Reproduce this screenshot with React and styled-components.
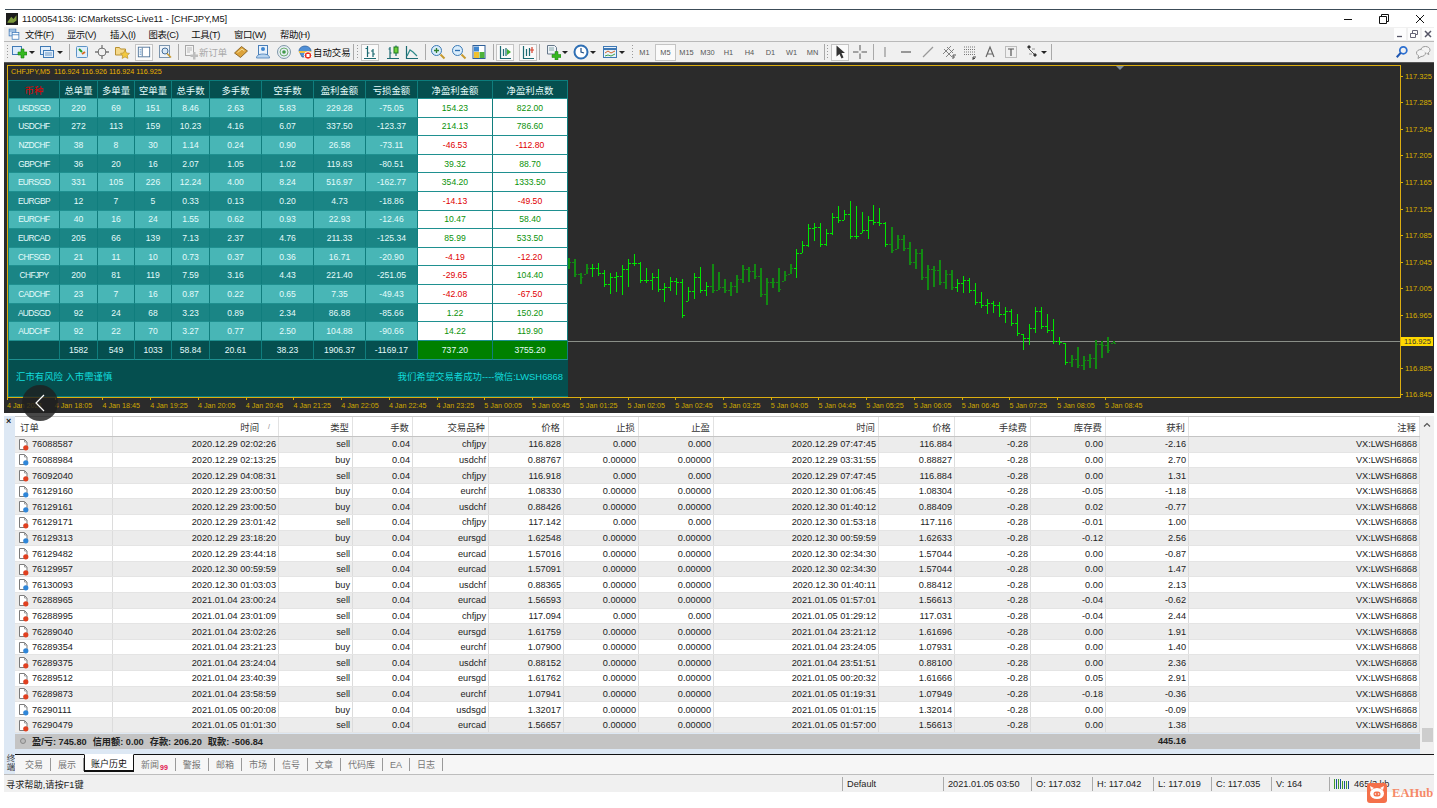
import React from "react";
import styled, { createGlobalStyle } from "styled-components";

const UI = `"Liberation Sans", "Noto Sans CJK SC", sans-serif`;

const Global = createGlobalStyle`
  html, body { margin: 0; padding: 0; background: #fff; }
  body { font-family: ${UI}; overflow: hidden; }
  * { box-sizing: border-box; }
`;

const Page = styled.div`
  position: relative;
  width: 1437px;
  height: 808px;
  padding-top: 9px;
  overflow: hidden;
  background: #fff;
`;
const TopLine = styled.div`
  height: 1px;
  margin-left: 5px;
  background: #3c4c58;
`;
const Win = styled.div`
  width: 1430px;
  margin-left: 4px;
  display: flex;
  flex-direction: column;
`;

/* title + menu */
const TitleBar = styled.div`
  height: 17px;
  display: flex;
  align-items: center;
  padding-left: 2px;
  background: #fff;
  color: #111;
  font-size: 9.3px;
`;
const TitleText = styled.span`
  margin-left: 4px;
`;
const Caption = styled.div`
  margin-left: auto;
  display: flex;
  gap: 26px;
  padding-right: 9px;
  align-items: center;
`;
const MenuBar = styled.div`
  height: 14px;
  display: flex;
  align-items: center;
  padding-left: 4px;
  background: #f0f0f0;
  font-size: 9.4px;
  letter-spacing: -0.4px;
  color: #111;
`;
const MenuItem = styled.span`
  margin-left: ${(p) => p.$ml}px;
  white-space: nowrap;
`;
const MdiBtns = styled.div`
  margin-left: auto;
  display: flex;
  gap: 2px;
`;
const MdiBtn = styled.div`
  width: 12px;
  height: 12px;
  background: #fdfdfd;
  display: flex;
  align-items: center;
  justify-content: center;
`;

/* toolbar */
const ToolBar = styled.div`
  height: 21px;
  display: flex;
  align-items: center;
  padding-left: 1px;
  background: #f0f0f0;
  border-top: 1px solid #b9b9b9;
`;
const Grip = styled.div`
  flex: none;
  width: 3px;
  height: 16px;
  margin-left: ${(p) => p.$ml || 0}px;
  background-image: radial-gradient(#9a9a9a 0.8px, transparent 0.9px);
  background-size: 3px 3px;
`;
const Sep = styled.div`
  flex: none;
  width: 1px;
  height: 16px;
  margin-left: ${(p) => p.$ml || 0}px;
  margin-right: ${(p) => p.$mr || 0}px;
  background: #a9a9a9;
`;
const Tool = styled.div`
  flex: none;
  width: ${(p) => p.$w || 16}px;
  height: ${(p) => (p.$pressed ? 17 : 16)}px;
  margin-left: ${(p) => p.$ml || 0}px;
  display: flex;
  align-items: center;
  justify-content: center;
  background: ${(p) => (p.$pressed ? "#fafafa" : "transparent")};
  border: ${(p) => (p.$pressed ? "1px solid #c4c4c4" : "0")};
`;
const Drop = styled.div`
  flex: none;
  width: 0;
  height: 0;
  margin-left: ${(p) => p.$ml || 0}px;
  margin-right: 1px;
  border-left: 3px solid transparent;
  border-right: 3px solid transparent;
  border-top: 3px solid #222;
`;
const ToolText = styled.span`
  flex: none;
  width: ${(p) => p.$w}px;
  font-size: 9.4px;
  white-space: nowrap;
  color: ${(p) => (p.$off ? "#a8a8a8" : "#111")};
`;
const Period = styled.div`
  flex: none;
  width: 21px;
  height: 17px;
  display: flex;
  align-items: center;
  justify-content: center;
  font-size: 7.4px;
  color: #555;
  background: ${(p) => (p.$on ? "#fafafa" : "transparent")};
  border: ${(p) => (p.$on ? "1px solid #c4c4c4" : "0")};
`;
const ToolRight = styled.div`
  margin-left: auto;
  padding-right: 3px;
  display: flex;
  gap: 6px;
  align-items: center;
`;

/* chart */
const Chart = styled.div`
  position: relative;
  height: 351px;
  padding: 2px 0 0 3px;
  background: #2b2b2b;
  border-top: 1px solid #555;
  display: grid;
  grid-template-columns: 1394px 1fr;
  grid-template-rows: 333px 1fr;
`;
const Frame = styled.div`
  position: relative;
  border: 1px solid #dcae10;
`;
const Legend = styled.div`
  position: absolute;
  left: 3px;
  top: 1px;
  font-size: 7.2px;
  line-height: 10px;
  color: #e8b400;
  white-space: nowrap;
`;
const Marker = styled.div`
  position: absolute;
  left: 1108px;
  top: 0;
  width: 0;
  height: 0;
  border-left: 4px solid transparent;
  border-right: 4px solid transparent;
  border-top: 4px solid #7b8a99;
`;
const Bars = styled.svg`
  position: absolute;
  left: 0;
  top: 0;
  display: block;
`;
const Scale = styled.div`
  display: flex;
  flex-direction: column;
  margin-top: -2px;
`;
const Tick = styled.div`
  flex: none;
  height: 26.55px;
  display: flex;
  align-items: center;
  padding-left: 0;
  font-size: 7.6px;
  color: #d9b000;
  &::before {
    content: "";
    width: 2px;
    height: 1px;
    margin-right: 2px;
    background: #d9b000;
  }
`;
const PriceNow = styled.span`
  margin-left: -4px;
  padding: 0 2px 0 3px;
  height: 9px;
  line-height: 9px;
  background: #ffd800;
  color: #333;
`;
const TimeAxis = styled.div`
  grid-column: 1 / -1;
  display: flex;
`;
const TimeLabel = styled.div`
  flex: none;
  width: 47.74px;
  padding-top: 3px;
  font-size: 7.2px;
  color: #cfa900;
  white-space: nowrap;
  position: relative;
  &::before {
    content: "";
    position: absolute;
    left: 0;
    top: 0;
    width: 1px;
    height: 2px;
    background: #d9b000;
  }
`;

/* panel that the EA draws on the chart */
const Panel = styled.div`
  position: absolute;
  left: 0;
  top: 14px;
  width: 560px;
  height: 317px;
  display: grid;
  grid-template-columns: 51px 38px 37px 37px 38px 52px 52px 52px 52px 75px 75px;
  grid-template-rows: 18px repeat(13, 18.62px) 19px 1fr;
  background: #108383;
  border: 1px solid #0c7c7c;
  font-size: 8.6px;
  color: #e4fbfb;
`;
const PCell = styled.div`
  display: flex;
  align-items: center;
  justify-content: center;
  white-space: nowrap;
  border-right: 1px solid #107d7d;
  border-bottom: 1px solid #1f9090;
  background: ${(p) =>
    ({ head: "#054f4f", light: "#48b6b6", dark: "#1a8585", net: "#fff", total: "#054f4f", win: "#008000" })[p.$tone]};
  color: ${(p) => p.$color || "inherit"};
  font-size: ${(p) => (p.$tone === "head" ? "9.4px" : p.$name ? "8.4px" : "8.6px")};
  letter-spacing: ${(p) => (p.$name ? "-0.6px" : "0")};
`;
const PFoot = styled.div`
  grid-column: 1 / -1;
  display: flex;
  align-items: center;
  justify-content: space-between;
  padding: 0 5px 3px 7px;
  background: #054f4f;
  color: #12dcdc;
  font-size: 9.4px;
`;
const BackBtn = styled.div`
  position: absolute;
  left: 18px;
  top: 322px;
  width: 36px;
  height: 36px;
  border-radius: 50%;
  background: rgba(32, 32, 32, 0.82);
  display: flex;
  align-items: center;
  justify-content: center;
`;

/* terminal */
const Terminal = styled.div`
  margin-top: 3px;
  height: 338px;
  display: grid;
  grid-template-columns: 11px 1405px 14px;
  background: #f0f0f0;
`;
const Side = styled.div`
  background: #dde8f4;
  padding: 0 0 0 2px;
  font-size: 9px;
  font-weight: 700;
  line-height: 9px;
  color: #222;
  padding-top: 1px;
`;
const Grid = styled.div`
  display: flex;
  flex-direction: column;
  background: #dde8f4;
`;
const THead = styled.div`
  display: grid;
  grid-template-columns: 98px 166px 74px 60px 76px 75px 75px 75px 165px 76px 76px 75px 83px 231px;
  height: 21px;
  background: #fff;
  border-top: 1px solid #c8c8c8;
  border-bottom: 1px solid #c4c4c4;
`;
const Th = styled.div`
  padding: 0 3px 0 ${(p) => (p.$left ? 5 : 3)}px;
  display: flex;
  align-items: center;
  justify-content: ${(p) => (p.$left ? "flex-start" : "flex-end")};
  border-right: 1px solid #e2e2e2;
  font-size: 9.4px;
  color: #333;
`;
const SortMark = styled.span`
  margin: 0 5px 0 9px;
  font-size: 7px;
  color: #888;
`;
const TBody = styled.div`
  height: 296.5px;
  display: grid;
  grid-template-rows: repeat(19, 1fr);
`;
const Row = styled.div`
  display: grid;
  grid-template-columns: 98px 166px 74px 60px 76px 75px 75px 75px 165px 76px 76px 75px 83px 231px;
  background: ${(p) => (p.$odd ? "#ececec" : "#fff")};
  border-bottom: 1px solid #e4e4e4;
`;
const Td = styled.div`
  display: flex;
  align-items: center;
  justify-content: ${(p) => (p.$left ? "flex-start" : "flex-end")};
  padding: 0 2px 0 ${(p) => (p.$left ? 3 : 2)}px;
  gap: ${(p) => (p.$left ? 3 : 0)}px;
  border-right: 1px solid #dcdcdc;
  font-size: 9.2px;
  color: #222;
  white-space: nowrap;
`;
const Summary = styled.div`
  height: 15.5px;
  display: grid;
  grid-template-columns: 1091px 83px 1fr;
  background: #c4c4c4;
  font-size: 9.2px;
  font-weight: 700;
  color: #222;
  align-items: center;
`;
const SumLeft = styled.div`
  display: flex;
  align-items: center;
  gap: 5px;
  padding-left: 5px;
`;
const SumPart = styled.span`
  margin-right: 1px;
  white-space: nowrap;
`;
const SumDot = styled.span`
  width: 6px;
  height: 6px;
  border-radius: 50%;
  border: 1px solid #888;
  background: #bbb;
  margin-right: 1px;
`;
const SumRight = styled.div`
  text-align: right;
  padding-right: 3px;
`;
const ScrollBar = styled.div`
  display: flex;
  flex-direction: column;
  align-items: center;
  background: #f0f0f0;
  padding-top: 6px;
`;
const Thumb = styled.div`
  margin-top: auto;
  width: 11px;
  height: 14px;
  margin-bottom: 3px;
  background: #cdcdcd;
`;
const ScrollEnd = styled.div`
  height: 7px;
  margin-bottom: 2px;
`;

/* tabs + status */
const Tabs = styled.div`
  height: 21px;
  display: flex;
  background: #f6f6f6;
  border-bottom: 1px solid #bdbdbd;
`;
const TabGrip = styled.div`
  flex: none;
  width: 11px;
  overflow: hidden;
  writing-mode: vertical-rl;
  font-size: 8.5px;
  line-height: 11px;
  white-space: nowrap;
  color: #333;
  background: #dde8f4;
`;
const TabRow = styled.div`
  flex: 1;
  display: flex;
  align-items: flex-start;
  border-top: 1px solid #111;
  padding-left: 3px;
`;
const TabItem = styled.div`
  flex: none;
  height: ${(p) => (p.$on ? 18 : 13)}px;
  margin-top: ${(p) => (p.$on ? -1 : 3)}px;
  padding: ${(p) => (p.$on ? "2px 6px 0" : "0 7px")};
  display: flex;
  align-items: ${(p) => (p.$on ? "flex-start" : "center")};
  font-size: 9px;
  white-space: nowrap;
  color: ${(p) => (p.$on ? "#111" : "#777")};
  background: ${(p) => (p.$on ? "#fff" : "transparent")};
  border-right: ${(p) => (p.$on ? "1px solid #111" : "1px solid #999")};
  border-left: ${(p) => (p.$on ? "1px solid #111" : "0")};
  border-bottom: ${(p) => (p.$on ? "2px solid #111" : "0")};
  border-top: ${(p) => (p.$on ? "1px solid #fff" : "0")};
`;
const Badge = styled.sub`
  font-size: 7px;
  font-weight: 700;
  color: #e0144c;
  margin-left: 1px;
  align-self: flex-end;
  line-height: 7px;
`;
const Status = styled.div`
  height: 17px;
  display: flex;
  align-items: center;
  background: #f0f0f0;
  font-size: 9.2px;
  color: #222;
`;
const StatusCell = styled.div`
  flex: none;
  width: ${(p) => p.$w}px;
  height: 14px;
  display: flex;
  align-items: center;
  gap: 3px;
  padding-left: ${(p) => (p.$first ? 2 : 4)}px;
  border-left: ${(p) => (p.$first ? "0" : "1px solid #aaa")};
  white-space: nowrap;
`;
const Brand = styled.div`
  position: absolute;
  left: 1367px;
  top: 783px;
  display: flex;
  align-items: center;
  gap: 5px;
`;
const BrandText = styled.span`
  font-family: "Liberation Serif", serif;
  font-weight: 700;
  font-size: 12.6px;
  color: #f58a68;
`;

/* icons */
const Svg = ({ children, s = 16 }) => (
  <svg width={s} height={s} viewBox="0 0 16 16" fill="none" style={{ flex: "none", display: "block" }}>
    {children}
  </svg>
);
const Ico = {
  app: (
    <Svg s={12}>
      <rect width="16" height="16" fill="#1c1c1c" />
      <path d="M2 12 7 5l3 3 4-5v7l-4 3H2z" fill="#7d9a3c" />
    </Svg>
  ),
  minimize: (
    <svg width="10" height="10"><path d="M1 5.5h8" stroke="#111" /></svg>
  ),
  restore: (
    <svg width="10" height="10" fill="none" stroke="#111"><path d="M.5 2.5h7v7h-7zM2.5 2.5v-2h7v7h-2" /></svg>
  ),
  close: (
    <svg width="10" height="10" stroke="#111"><path d="M1 1l8 8M9 1l-8 8" /></svg>
  ),
  menuDoc: (
    <Svg s={12}>
      <rect x="1.5" y="1.5" width="9" height="9" fill="#dbe9f8" stroke="#3a76b8" />
      <rect x="5.5" y="6" width="9" height="9" fill="#fff" stroke="#3a76b8" />
      <path d="M1.5 4h9M5.5 9h9" stroke="#3a76b8" />
    </Svg>
  ),
  newChart: (
    <Svg>
      <rect x="1.5" y="2.5" width="9" height="8" fill="#dcebfb" stroke="#3f79b5" />
      <path d="M10 5v3H7v3h3v3h3v-3h3V8h-3V5z" fill="#35b820" stroke="#1a7d10" strokeWidth=".6" />
    </Svg>
  ),
  profile: (
    <Svg>
      <rect x="1.5" y="2.5" width="10" height="8" fill="#e3effb" stroke="#3f79b5" />
      <rect x="4.5" y="6.5" width="10" height="7" fill="#e3effb" stroke="#3f79b5" />
      <path d="M6 9h7M6 11h7" stroke="#6a97c7" />
    </Svg>
  ),
  market: (
    <Svg>
      <rect x="2.5" y="2.5" width="11" height="11" rx="1" fill="#dfeefa" stroke="#5c93c7" />
      <path d="M5 5l3 3" stroke="#23a023" strokeWidth="2" />
      <path d="M8 10l3-2" stroke="#d86a20" strokeWidth="2" />
    </Svg>
  ),
  cross: (
    <Svg>
      <circle cx="8" cy="8" r="4" stroke="#777" />
      <path d="M8 1v4M8 11v4M1 8h4M11 8h4" stroke="#777" strokeWidth="1.3" />
    </Svg>
  ),
  folderStar: (
    <Svg>
      <path d="M1.5 5V3.500h4l1 1.500h5v6h-10z" fill="#f5d98b" stroke="#b89030" />
      <path d="M11 6l1.500 3 3 .4-2.200 2 .6 3-2.900-1.500-2.900 1.500.6-3-2.200-2 3-.4z" fill="#f3c93f" stroke="#b89030" strokeWidth=".7" />
    </Svg>
  ),
  navigator: (
    <Svg s={14}>
      <rect x="1.500" y="2.500" width="13" height="11" fill="#fff" stroke="#4a6f96" />
      <path d="M6 3v10" stroke="#4a6f96" />
      <path d="M3 5.500h2M3 8h2M3 10.500h2" stroke="#3c7fc0" />
    </Svg>
  ),
  tester: (
    <Svg>
      <rect x="2.500" y="1.500" width="10" height="12" fill="#eef3f8" stroke="#7b94ad" />
      <circle cx="8" cy="7" r="3" fill="#d8e8f6" stroke="#456e9a" />
      <path d="M10 9.500l4 4" stroke="#c89a30" strokeWidth="1.600" />
    </Svg>
  ),
  order: (
    <Svg>
      <rect x="2.500" y="1.500" width="8" height="10" fill="#f4f4f4" stroke="#a8a8a8" />
      <path d="M4 4h5M4 6h5M4 8h3" stroke="#bbb" />
      <path d="M10 8v2.500H7.500v2.500H10v2.500h2.500V13H15v-2.500h-2.500V8z" fill="#bdbdbd" />
    </Svg>
  ),
  gold: (
    <Svg>
      <path d="M1.500 9 8.500 2.500l6 4.500-7 6.500z" fill="#dca23a" stroke="#7a5618" strokeWidth=".8" />
      <path d="M4.500 8.500 9 5l2.500 2" stroke="#f7e3a0" />
    </Svg>
  ),
  person: (
    <Svg>
      <rect x="3.500" y="1.500" width="9" height="9" fill="#eaf2fb" stroke="#4a7fb8" />
      <circle cx="8" cy="5" r="2" fill="#3f86cf" />
      <path d="M1.500 14c0-3 3-4 6.500-4s6.500 1 6.500 4z" fill="#b7d3ee" stroke="#4a7fb8" strokeWidth=".8" />
    </Svg>
  ),
  signal: (
    <Svg>
      <circle cx="8" cy="8" r="6.500" fill="#e6eef4" stroke="#7f97a8" />
      <circle cx="8" cy="8" r="4" stroke="#6faf72" />
      <circle cx="8" cy="8" r="1.800" fill="#3f9a48" />
    </Svg>
  ),
  auto: (
    <Svg>
      <path d="M2 7c0-3 3-5 6-5s6 2 6 5l-3 6H5z" fill="#4f8fd6" stroke="#2e5f99" strokeWidth=".7" />
      <path d="M2 8h12" stroke="#f0c040" strokeWidth="2" />
      <circle cx="11" cy="11.500" r="3.800" fill="#e83020" stroke="#fff" />
      <rect x="9.500" y="10" width="3" height="3" fill="#fff" />
    </Svg>
  ),
  barChart: (
    <Svg>
      <path d="M2 14.500h12M5.500 2v11M3.500 4.500h2M5.500 9h2M11 5v8M9 7h2M11 10h2" stroke="#1c6a72" strokeWidth="1.200" />
    </Svg>
  ),
  candle: (
    <Svg>
      <path d="M2 14.500h12M5 3v11M11 1.500V12" stroke="#1c6a72" strokeWidth="1.200" />
      <rect x="9" y="3" width="4" height="6" fill="#6fd03a" stroke="#1f7a22" />
      <path d="M3.500 5h1.500M5 9h1.500" stroke="#1c6a72" />
    </Svg>
  ),
  line: (
    <Svg>
      <path d="M2.500 2v12.500H14" stroke="#1c6a72" strokeWidth="1.200" />
      <path d="M3 12l3-6 3 2 4 4" stroke="#2f8a8a" strokeWidth="1.200" />
    </Svg>
  ),
  zoomIn: (
    <Svg>
      <circle cx="6.500" cy="6.500" r="5" fill="#d8ecfb" stroke="#3b79b4" />
      <path d="M4 6.500h5M6.500 4v5" stroke="#2f7f2f" strokeWidth="1.300" />
      <path d="M10.500 10.500l4 4" stroke="#c69a2f" strokeWidth="2" />
    </Svg>
  ),
  zoomOut: (
    <Svg>
      <circle cx="6.500" cy="6.500" r="5" fill="#d8ecfb" stroke="#3b79b4" />
      <path d="M4 6.500h5" stroke="#2f6fb0" strokeWidth="1.300" />
      <path d="M10.500 10.500l4 4" stroke="#c69a2f" strokeWidth="2" />
    </Svg>
  ),
  tile: (
    <Svg>
      <rect x="2" y="1.500" width="12" height="13" fill="#fff" stroke="#2e5f99" />
      <rect x="3" y="2.500" width="5" height="5" fill="#3f86cf" />
      <rect x="8.500" y="8" width="5" height="6" fill="#4db23a" />
      <rect x="3" y="8" width="5" height="6" fill="#f0c030" />
    </Svg>
  ),
  shiftEnd: (
    <Svg>
      <path d="M3.500 2v12.500H14M6.500 5v7M9 4v8" stroke="#1c6a72" strokeWidth="1.200" />
      <path d="M10 5l4 3-4 3z" fill="#3fb030" />
    </Svg>
  ),
  shiftPos: (
    <Svg>
      <path d="M3.500 2v12.500H14M6.500 5v7M9.500 4v8" stroke="#1c6a72" strokeWidth="1.200" />
      <path d="M12 3v6M10 6h4" stroke="#d8402a" strokeWidth="1.200" />
    </Svg>
  ),
  newDoc: (
    <Svg>
      <path d="M2.500 1.500h7l2 2V10h-9z" fill="#eef3f8" stroke="#66788a" />
      <path d="M4 4h5M4 6h5" stroke="#8aa" />
      <path d="M10 7.500v3H7v3h3v2.500h3v-2.500h3v-3h-3v-3z" fill="#35b820" stroke="#1a7d10" strokeWidth=".5" />
    </Svg>
  ),
  clock: (
    <Svg>
      <circle cx="8" cy="8" r="6.500" fill="#fff" stroke="#2e6fb4" strokeWidth="2" />
      <path d="M8 4v4l3 1" stroke="#1e4f86" strokeWidth="1.200" />
    </Svg>
  ),
  template: (
    <Svg>
      <rect x="1.500" y="2.500" width="13" height="11" fill="#e9f2fb" stroke="#3f79b5" />
      <path d="M1.500 5h13" stroke="#3f79b5" strokeWidth="2" />
      <path d="M3 9l3-2 3 2 4-2" stroke="#d4652a" />
      <path d="M3 12l3-1 3 1 4-2" stroke="#3fa04a" />
    </Svg>
  ),
  pointer: (
    <Svg>
      <path d="M4.500 1.500v11l3-2.500 2 4.500 2-1-2-4.500H13z" fill="#333" />
    </Svg>
  ),
  crosshair: (
    <Svg>
      <path d="M8 1v5.500M8 9.500V15M1 8h5.500M9.500 8H15" stroke="#555" />
    </Svg>
  ),
  vLine: (
    <Svg><path d="M8 3v10" stroke="#999" strokeWidth="1.300" /></Svg>
  ),
  hLine: (
    <Svg><path d="M3 8h10" stroke="#666" strokeWidth="1.300" /></Svg>
  ),
  trend: (
    <Svg><path d="M3 13 13 3" stroke="#999" strokeWidth="1.200" /></Svg>
  ),
  channel: (
    <Svg>
      <path d="M2 10 10 2M5 13l8-8M3 5l8 8M6 3l6 6" stroke="#777" strokeWidth=".9" />
      <path d="M12 11v4M12 11h3M12 13h2" stroke="#555" />
    </Svg>
  ),
  fibo: (
    <Svg>
      <path d="M2 3h12M2 5.500h12M2 8h12M2 10.500h12" stroke="#777" strokeDasharray="1 1" />
      <path d="M11 13v3M11 13h3M11 14.500h2" stroke="#444" />
    </Svg>
  ),
  textA: (
    <Svg><path d="M4 13 8 3l4 10M5.500 10h5" stroke="#666" strokeWidth="1.200" /></Svg>
  ),
  label: (
    <Svg>
      <rect x="2.500" y="2.500" width="11" height="11" stroke="#888" strokeDasharray="1 1" />
      <path d="M5 5h6M8 5v7" stroke="#555" strokeWidth="1.200" />
    </Svg>
  ),
  shapes: (
    <Svg>
      <path d="M3 3l2-2 2 2-2 2zM9 11l2-2 2 2-2 2z" fill="#333" />
      <path d="M5 5l5 5" stroke="#555" />
      <path d="M8 5h3M5 10h3" stroke="#999" />
    </Svg>
  ),
  search: (
    <Svg s={14}>
      <circle cx="9.500" cy="6" r="4" stroke="#2c6fd0" strokeWidth="2" />
      <path d="M6.500 9 2 14" stroke="#1e56b0" strokeWidth="2.400" />
    </Svg>
  ),
  chat: (
    <Svg>
      <path d="M1.500 9c0-2 2-3.500 4.500-3.500s4.500 1.500 4.500 3.500S8.500 12.500 6 12.500l-3 2 .6-2.800C2.300 11 1.500 10 1.500 9z" fill="#f4f4f4" stroke="#9a9a9a" />
      <path d="M6 5c.6-1.500 2.300-2.500 4.500-2.500C13 2.500 15 4 15 6c0 1-.6 2-1.600 2.600l.4 2-2.300-1.400" fill="#f4f4f4" stroke="#9a9a9a" />
    </Svg>
  ),
  back: (
    <svg width="12" height="20" fill="none" stroke="#fff" strokeWidth="1.200"><path d="M10 2 2 10l8 8" /></svg>
  ),
  mdiMin: (
    <svg width="8" height="8"><path d="M1 6.500h5" stroke="#556" strokeWidth="1.300" /></svg>
  ),
  mdiRestore: (
    <svg width="8" height="8" fill="none" stroke="#667"><path d="M.5 3.500h5v4h-5zM2.500 3V.5h5v4H6" /></svg>
  ),
  mdiClose: (
    <svg width="8" height="8" stroke="#556" strokeWidth="1.500"><path d="M1 1l6 6M7 1 1 7" /></svg>
  ),
  up: (
    <svg width="8" height="6" fill="none" stroke="#555" strokeWidth="1.200"><path d="M1 4.500 4 1.500l3 3" /></svg>
  ),
  down: (
    <svg width="8" height="6" fill="none" stroke="#555" strokeWidth="1.200"><path d="M1 1.500 4 4.500l3-3" /></svg>
  ),
  volume: (
    <svg width="17" height="12">
      {[0, 2, 4, 6, 8, 10, 12, 14].map((x, i) => (
        <rect key={x} x={x} y={i < 4 ? 1 : 3} width="1" height={i < 4 ? 10 : 8} fill={i % 2 ? "#1c4f9c" : "#3f9a2a"} />
      ))}
    </svg>
  ),
};
const Doc = ({ kind }) => (
  <svg width="11" height="13" viewBox="0 0 11 13" fill="none" style={{ flex: "none" }}>
    <path d="M1.500 1.500h5l2.500 2.500v7.500h-7.500z" fill="#fff" stroke="#7b7b7b" />
    <path d="M6.500 1.500V4H9" stroke="#9a9a9a" />
    <circle cx="7.800" cy="9.800" r="2.600" fill={kind === "sell" ? "#e04020" : "#2f86d8"} />
  </svg>
);

/* chart data: high / low as read off the picture, in page pixels */
const H = [258,259,273,264,264,263,270,273,272,265,259,254,262,268,273,269,283,277,278,279,287,273,267,282,264,272,279,282,275,265,267,264,268,278,278,268,271,264,249,241,224,223,223,229,213,206,210,201,206,212,216,205,208,222,227,235,235,242,249,249,265,266,260,270,270,279,276,278,283,292,299,301,302,307,309,314,334,324,307,307,314,319,337,343,355,347,356,354,340,341,337,341];
const L = [269,277,284,274,277,276,287,294,292,295,287,266,283,283,290,292,302,291,295,318,301,299,293,296,293,290,293,296,293,283,282,279,297,305,288,292,281,274,278,253,247,241,247,246,235,223,220,239,239,233,239,225,226,247,253,249,251,265,269,280,290,287,285,289,290,292,293,293,305,308,314,313,317,323,326,336,350,345,333,329,333,344,345,365,367,368,370,368,369,358,353,343];
const pts = H.map((h, i) => ({ h, l: L[i], x: Math.round(568 + 5.99 * i) }));
const dark = (i) => i < 4 || (i >= 24 && i <= 37) || (i >= 54 && i <= 64) || i >= 84;

function PriceBars() {
  let prev = pts[0].h + 6;
  return (
    <Bars width="1392" height="331" viewBox="8 66 1392 331" shapeRendering="crispEdges">
      <rect x="568" y="341" width="832" height="1" fill="#8a8f88" />
      {pts.map((p, i) => {
        const next = pts[i + 1] || p;
        const open = Math.max(p.h, Math.min(p.l, prev));
        const falling = next.h > p.h + 2;
        const close = Math.min(p.l, Math.max(p.h, falling ? p.l - 3 : p.h + 4));
        prev = close;
        const c = dark(i) ? "#128a12" : "#00e600";
        return (
          <g key={i} fill={c}>
            <rect x={p.x} y={p.h} width={dark(i) ? 2 : 1} height={p.l - p.h} />
            <rect x={p.x - 2} y={open} width="2" height="1" />
            <rect x={p.x + 1} y={close} width="2" height="1" />
          </g>
        );
      })}
    </Bars>
  );
}

const panelRows = [
  "USDSGD 220 69 151 8.46 2.63 5.83 229.28 -75.05 154.23 822.00",
  "USDCHF 272 113 159 10.23 4.16 6.07 337.50 -123.37 214.13 786.60",
  "NZDCHF 38 8 30 1.14 0.24 0.90 26.58 -73.11 -46.53 -112.80",
  "GBPCHF 36 20 16 2.07 1.05 1.02 119.83 -80.51 39.32 88.70",
  "EURSGD 331 105 226 12.24 4.00 8.24 516.97 -162.77 354.20 1333.50",
  "EURGBP 12 7 5 0.33 0.13 0.20 4.73 -18.86 -14.13 -49.50",
  "EURCHF 40 16 24 1.55 0.62 0.93 22.93 -12.46 10.47 58.40",
  "EURCAD 205 66 139 7.13 2.37 4.76 211.33 -125.34 85.99 533.50",
  "CHFSGD 21 11 10 0.73 0.37 0.36 16.71 -20.90 -4.19 -12.20",
  "CHFJPY 200 81 119 7.59 3.16 4.43 221.40 -251.05 -29.65 104.40",
  "CADCHF 23 7 16 0.87 0.22 0.65 7.35 -49.43 -42.08 -67.50",
  "AUDSGD 92 24 68 3.23 0.89 2.34 86.88 -85.66 1.22 150.20",
  "AUDCHF 92 22 70 3.27 0.77 2.50 104.88 -90.66 14.22 119.90",
].map((r) => r.split(" "));
const panelHead = ["币种", "总单量", "多单量", "空单量", "总手数", "多手数", "空手数", "盈利金额", "亏损金额", "净盈利金额", "净盈利点数"];
const panelTotal = ["", "1582", "549", "1033", "58.84", "20.61", "38.23", "1906.37", "-1169.17", "737.20", "3755.20"];

const orders = [
  "76088587|2020.12.29 02:02:26|sell|chfjpy|116.828|2020.12.29 07:47:45|116.884|0.00|-2.16",
  "76088984|2020.12.29 02:13:25|buy|usdchf|0.88767|2020.12.29 03:31:55|0.88827|0.00|2.70",
  "76092040|2020.12.29 04:08:31|sell|chfjpy|116.918|2020.12.29 07:47:45|116.884|0.00|1.31",
  "76129160|2020.12.29 23:00:50|buy|eurchf|1.08330|2020.12.30 01:06:45|1.08304|-0.05|-1.18",
  "76129161|2020.12.29 23:00:50|buy|usdchf|0.88426|2020.12.30 01:40:12|0.88409|0.02|-0.77",
  "76129171|2020.12.29 23:01:42|sell|chfjpy|117.142|2020.12.30 01:53:18|117.116|-0.01|1.00",
  "76129313|2020.12.29 23:18:20|buy|eursgd|1.62548|2020.12.30 00:59:59|1.62633|-0.12|2.56",
  "76129482|2020.12.29 23:44:18|sell|eurcad|1.57016|2020.12.30 02:34:30|1.57044|0.00|-0.87",
  "76129957|2020.12.30 00:59:59|sell|eurcad|1.57091|2020.12.30 02:34:30|1.57044|0.00|1.47",
  "76130093|2020.12.30 01:03:03|buy|usdchf|0.88365|2020.12.30 01:40:11|0.88412|0.00|2.13",
  "76288965|2021.01.04 23:00:24|sell|eurcad|1.56593|2021.01.05 01:57:01|1.56613|-0.04|-0.62",
  "76288995|2021.01.04 23:01:09|sell|chfjpy|117.094|2021.01.05 01:29:12|117.031|-0.04|2.44",
  "76289040|2021.01.04 23:02:26|sell|eursgd|1.61759|2021.01.04 23:21:12|1.61696|0.00|1.91",
  "76289354|2021.01.04 23:21:23|buy|eurchf|1.07900|2021.01.04 23:24:05|1.07931|0.00|1.40",
  "76289375|2021.01.04 23:24:04|sell|usdchf|0.88152|2021.01.04 23:51:51|0.88100|0.00|2.36",
  "76289512|2021.01.04 23:40:39|sell|eursgd|1.61762|2021.01.05 00:20:32|1.61666|0.05|2.91",
  "76289873|2021.01.04 23:58:59|sell|eurchf|1.07941|2021.01.05 01:19:31|1.07949|-0.18|-0.36",
  "76290111|2021.01.05 00:20:08|buy|usdsgd|1.32017|2021.01.05 01:01:15|1.32014|0.00|-0.09",
  "76290479|2021.01.05 01:01:30|sell|eurcad|1.56657|2021.01.05 01:57:00|1.56613|0.00|1.38",
].map((r) => r.split("|"));
const orderHead = ["订单", "时间", "类型", "手数", "交易品种", "价格", "止损", "止盈", "时间", "价格", "手续费", "库存费", "获利", "注释"];

const menus = [
  ["文件(F)", 5], ["显示(V)", 13], ["插入(I)", 14], ["图表(C)", 13],
  ["工具(T)", 13], ["窗口(W)", 14], ["帮助(H)", 14],
];
const prices = ["117.325", "117.285", "117.245", "117.205", "117.165", "117.125", "117.085", "117.045", "117.005", "116.965", "116.925", "116.885", "116.845"];
const times = ["4 Jan 2021", "4 Jan 18:05", "4 Jan 18:45", "4 Jan 19:25", "4 Jan 20:05", "4 Jan 20:45", "4 Jan 21:25", "4 Jan 22:05", "4 Jan 22:45", "4 Jan 23:25", "5 Jan 00:05", "5 Jan 00:45", "5 Jan 01:25", "5 Jan 02:05", "5 Jan 02:45", "5 Jan 03:25", "5 Jan 04:05", "5 Jan 04:45", "5 Jan 05:25", "5 Jan 06:05", "5 Jan 06:45", "5 Jan 07:25", "5 Jan 08:05", "5 Jan 08:45"];
const tabs = ["交易", "展示", "账户历史", "新闻", "警报", "邮箱", "市场", "信号", "文章", "代码库", "EA", "日志"];

export default function App() {
  return (
    <Page>
      <Global />
      <TopLine />
      <Win>
        <TitleBar>
          {Ico.app}
          <TitleText>1100054136: ICMarketsSC-Live11 - [CHFJPY,M5]</TitleText>
          <Caption>
            {Ico.minimize}
            {Ico.restore}
            {Ico.close}
          </Caption>
        </TitleBar>

        <MenuBar>
          {Ico.menuDoc}
          {menus.map(([m, ml]) => (
            <MenuItem key={m} $ml={ml}>{m}</MenuItem>
          ))}
          <MdiBtns>
            <MdiBtn>{Ico.mdiMin}</MdiBtn>
            <MdiBtn>{Ico.mdiRestore}</MdiBtn>
            <MdiBtn>{Ico.mdiClose}</MdiBtn>
          </MdiBtns>
        </MenuBar>

        <ToolBar>
          <Grip $ml={1} />
          <Tool $ml={2}>{Ico.newChart}</Tool>
          <Drop $ml={2} />
          <Tool $ml={3}>{Ico.profile}</Tool>
          <Drop $ml={2} />
          <Sep $ml={5} />
          <Tool $ml={4}>{Ico.market}</Tool>
          <Tool $ml={4}>{Ico.cross}</Tool>
          <Tool $ml={4}>{Ico.folderStar}</Tool>
          <Tool $ml={5} $w={18} $pressed>{Ico.navigator}</Tool>
          <Tool $ml={4}>{Ico.tester}</Tool>
          <Sep $ml={5} />
          <Tool $ml={4}>{Ico.order}</Tool>
          <ToolText $w={28} $off>新订单</ToolText>
          <Tool $ml={6}>{Ico.gold}</Tool>
          <Tool $ml={6}>{Ico.person}</Tool>
          <Tool $ml={5}>{Ico.signal}</Tool>
          <Tool $ml={5}>{Ico.auto}</Tool>
          <ToolText $w={36}>自动交易</ToolText>
          <Sep $ml={4} />
          <Grip $ml={2} />
          <Tool $ml={2} $w={18} $pressed>{Ico.barChart}</Tool>
          <Tool $ml={6}>{Ico.candle}</Tool>
          <Tool $ml={3}>{Ico.line}</Tool>
          <Sep $ml={5} />
          <Tool $ml={4}>{Ico.zoomIn}</Tool>
          <Tool $ml={5}>{Ico.zoomOut}</Tool>
          <Tool $ml={4}>{Ico.tile}</Tool>
          <Sep $ml={6} />
          <Tool $ml={2} $w={18} $pressed>{Ico.shiftEnd}</Tool>
          <Tool $ml={5} $w={18} $pressed>{Ico.shiftPos}</Tool>
          <Sep $ml={2} />
          <Tool $ml={5}>{Ico.newDoc}</Tool>
          <Drop $ml={1} />
          <Tool $ml={4}>{Ico.clock}</Tool>
          <Drop $ml={1} />
          <Tool $ml={5}>{Ico.template}</Tool>
          <Drop $ml={1} />
          <Grip $ml={5} />
          {["M1", "M5", "M15", "M30", "H1", "H4", "D1", "W1", "MN"].map((p) => (
            <Period key={p} $on={p === "M5"}>{p}</Period>
          ))}
          <Sep $ml={1} />
          <Grip $ml={1} />
          <Tool $ml={2} $w={18} $pressed>{Ico.pointer}</Tool>
          <Tool $ml={3}>{Ico.crosshair}</Tool>
          <Sep $ml={5} />
          <Tool $ml={3}>{Ico.vLine}</Tool>
          <Tool $ml={5}>{Ico.hLine}</Tool>
          <Tool $ml={6}>{Ico.trend}</Tool>
          <Tool $ml={5}>{Ico.channel}</Tool>
          <Tool $ml={5}>{Ico.fibo}</Tool>
          <Tool $ml={4}>{Ico.textA}</Tool>
          <Tool $ml={5}>{Ico.label}</Tool>
          <Tool $ml={5}>{Ico.shapes}</Tool>
          <Drop $ml={1} />
          <Sep $ml={3} />
          <ToolRight>
            {Ico.search}
            {Ico.chat}
          </ToolRight>
        </ToolBar>

        <Chart>
          <Frame>
            <PriceBars />
            <Legend>CHFJPY,M5&nbsp; 116.924 116.926 116.924 116.925</Legend>
            <Marker />
            <Panel>
              {panelHead.map((h, i) => (
                <PCell key={h} $tone="head" $color={i === 0 ? "#e00000" : undefined}>{h}</PCell>
              ))}
              {panelRows.map((r, ri) =>
                r.map((v, ci) => {
                  const isNet = ci >= 9;
                  const tone = isNet ? "net" : ri % 2 ? "dark" : "light";
                  const color = isNet ? (v.startsWith("-") ? "#e00000" : "#0a920a") : undefined;
                  return <PCell key={ri + "-" + ci} $tone={tone} $color={color} $name={ci === 0}>{v}</PCell>;
                })
              )}
              {panelTotal.map((v, i) => (
                <PCell key={"t" + i} $tone={i >= 9 ? "win" : "total"}>{v}</PCell>
              ))}
              <PFoot>
                <span>汇市有风险 入市需谨慎</span>
                <span>我们希望交易者成功----微信:LWSH6868</span>
              </PFoot>
            </Panel>
          </Frame>
          <Scale>
            {prices.map((p) => (
              <Tick key={p}>{p === "116.925" ? <PriceNow>{p}</PriceNow> : p}</Tick>
            ))}
          </Scale>
          <TimeAxis>
            {times.map((t) => (
              <TimeLabel key={t}>{t}</TimeLabel>
            ))}
          </TimeAxis>
          <BackBtn>{Ico.back}</BackBtn>
        </Chart>

        <Terminal>
          <Side>×</Side>
          <Grid>
            <THead>
              {orderHead.map((h, i) => (
                <Th key={i} $left={i === 0}>
                  {h}
                  {i === 1 && <SortMark>/</SortMark>}
                </Th>
              ))}
            </THead>
            <TBody>
              {orders.map((o, i) => {
                const jpy = o[3].endsWith("jpy");
                const zero = jpy ? "0.000" : "0.00000";
                return (
                  <Row key={o[0]} $odd={i % 2 === 0}>
                    <Td $left><Doc kind={o[2]} />{o[0]}</Td>
                    <Td>{o[1]}</Td>
                    <Td>{o[2]}</Td>
                    <Td>0.04</Td>
                    <Td>{o[3]}</Td>
                    <Td>{o[4]}</Td>
                    <Td>{zero}</Td>
                    <Td>{zero}</Td>
                    <Td>{o[5]}</Td>
                    <Td>{o[6]}</Td>
                    <Td>-0.28</Td>
                    <Td>{o[7]}</Td>
                    <Td>{o[8]}</Td>
                    <Td>VX:LWSH6868</Td>
                  </Row>
                );
              })}
            </TBody>
            <Summary>
              <SumLeft>
                <SumDot />
                <SumPart>盈/亏: 745.80</SumPart>
                <SumPart>信用额: 0.00</SumPart>
                <SumPart>存款: 206.20</SumPart>
                <SumPart>取款: -506.84</SumPart>
              </SumLeft>
              <SumRight>445.16</SumRight>
            </Summary>
          </Grid>
          <ScrollBar>
            {Ico.up}
            <Thumb />
            <ScrollEnd>{Ico.down}</ScrollEnd>
          </ScrollBar>
        </Terminal>

        <Tabs>
          <TabGrip>终端</TabGrip>
          <TabRow>
            {tabs.map((t) => (
              <TabItem key={t} $on={t === "账户历史"}>
                {t}
                {t === "新闻" && <Badge>99</Badge>}
              </TabItem>
            ))}
          </TabRow>
        </Tabs>

        <Status>
          <StatusCell $first $w={838}>寻求帮助,请按F1键</StatusCell>
          <StatusCell $w={101}>Default</StatusCell>
          <StatusCell $w={88}>2021.01.05 03:50</StatusCell>
          <StatusCell $w={61}>O: 117.032</StatusCell>
          <StatusCell $w={61}>H: 117.042</StatusCell>
          <StatusCell $w={58}>L: 117.019</StatusCell>
          <StatusCell $w={60}>C: 117.035</StatusCell>
          <StatusCell $w={58}>V: 164</StatusCell>
          <StatusCell $w={100}>{Ico.volume}465/3 kb</StatusCell>
        </Status>
      </Win>

      <Brand>
        <svg width="20" height="20" viewBox="0 0 20 20">
          <rect width="20" height="20" rx="3" fill="#f4704a" />
          <path d="M4 7 3 3l4 2zM16 7l1-4-4 2z" fill="#fff" />
          <ellipse cx="10" cy="10.500" rx="7" ry="5.500" fill="#fff" />
          <rect x="6.500" y="8.500" width="7" height="5" rx="2.500" fill="#f4704a" />
          <circle cx="8.500" cy="11" r=".8" fill="#fff" />
          <circle cx="11.500" cy="11" r=".8" fill="#fff" />
        </svg>
        <BrandText>EAHub</BrandText>
      </Brand>
    </Page>
  );
}
